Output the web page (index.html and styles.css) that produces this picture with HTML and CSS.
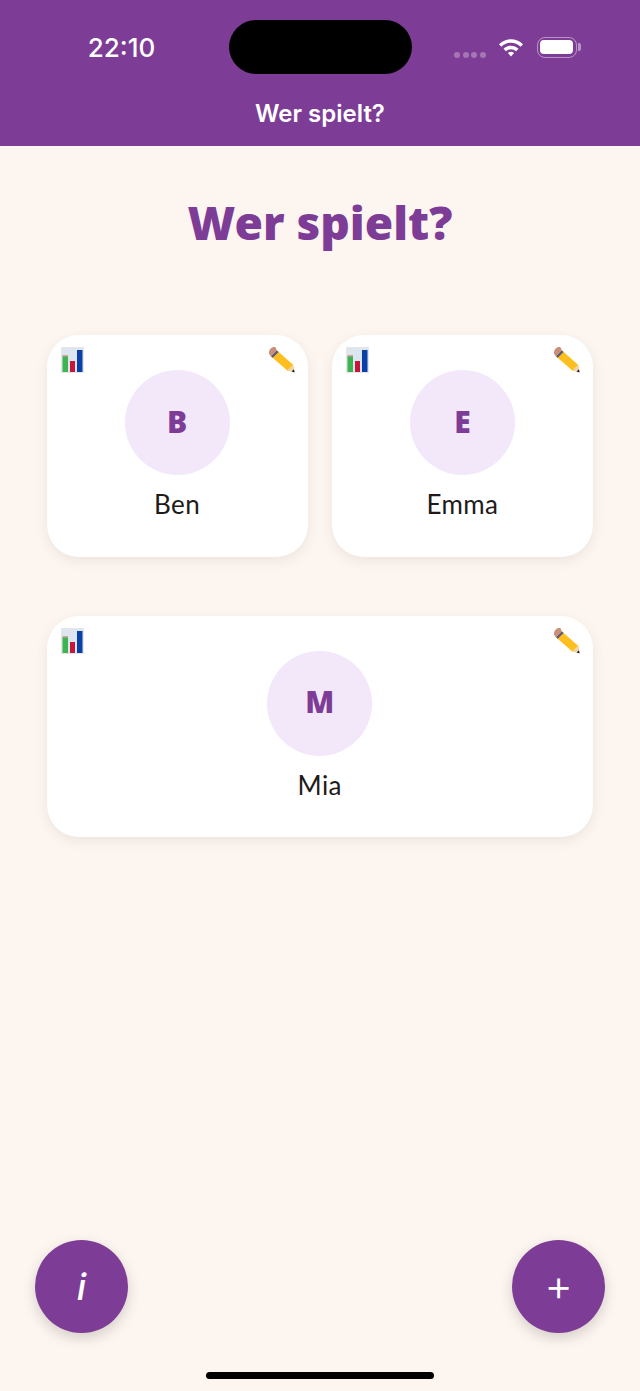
FILE: index.html
```html
<!DOCTYPE html>
<html lang="de">
<head>
    <meta charset="UTF-8">
    <meta name="viewport" content="width=device-width, initial-scale=1.0">
    <title>Wer spielt?</title>
    <link rel="stylesheet" href="styles.css">
</head>
<body>
    <header class="topbar">
        <div class="statusbar">
            <span class="clock">22:10</span>
            <div class="island"></div>
            <div class="status-icons">
                <div class="signal"><i></i><i></i><i></i><i></i></div>
                <svg class="wifi" width="28" height="20" viewBox="0 0 26 20">
                    <path d="M1 7.200C7.800 .6 18.200 .6 25 7.200l-2.400 2.500C17.100 4.500 8.900 4.500 3.400 9.700Z" fill="#fff"/>
                    <path d="M5.500 11.800C9.800 7.700 16.200 7.700 20.500 11.800l-2.400 2.400C15.200 11.500 10.800 11.500 7.900 14.200Z" fill="#fff"/>
                    <path d="M9.900 16C11.800 14.300 14.200 14.300 16.100 16L13 19.400Z" fill="#fff"/>
                </svg>
                <div class="battery"><div class="battery-level"></div></div>
                <div class="battery-tip"></div>
            </div>
        </div>
        <div class="topbar-title">Wer spielt?</div>
    </header>

    <main class="content">
        <h1>Wer spielt?</h1>

        <div class="players">
            <div class="card">
                <svg class="icon-stats" width="24" height="26" viewBox="0 0 24 26">
                    <rect x="0.500" y="0.500" width="22" height="25" fill="#dce6ee" stroke="#e6e6ea"/>
                    <rect x="1.500" y="9" width="5.500" height="16" fill="#3cb44f"/>
                    <rect x="1.500" y="8" width="5.500" height="1.500" fill="#d9a0a0"/>
                    <rect x="9" y="14" width="5" height="11" fill="#c4173a"/>
                    <rect x="16" y="3" width="5.500" height="22" fill="#0b3fa8"/>
                </svg>
                <svg class="icon-edit" width="27" height="27" viewBox="0 0 28 28">
                    <path d="M9 4.500L26 19.500L27.500 27L20 25.500L3 10.500Z" fill="#fdbf1f"/>
                    <path d="M20 25.500L26 19.500L27.500 27Z" fill="#f0d5a8"/>
                    <path d="M24.500 26.500L27 24L27.500 27.500Z" fill="#1c1c3a"/>
                    <path d="M3 10.500L9 4.500L11 6.300L5 12.300Z" fill="#5f5a78"/>
                    <path d="M1 7C1 3 5 0 8 1.500L9 4.500L3 10.500C2 9.500 1 8.500 1 7Z" fill="#c98f78"/>
                </svg>
                <div class="avatar">B</div>
                <div class="name">Ben</div>
            </div>
            <div class="card">
                <svg class="icon-stats" width="24" height="26" viewBox="0 0 24 26">
                    <rect x="0.500" y="0.500" width="22" height="25" fill="#dce6ee" stroke="#e6e6ea"/>
                    <rect x="1.500" y="9" width="5.500" height="16" fill="#3cb44f"/>
                    <rect x="1.500" y="8" width="5.500" height="1.500" fill="#d9a0a0"/>
                    <rect x="9" y="14" width="5" height="11" fill="#c4173a"/>
                    <rect x="16" y="3" width="5.500" height="22" fill="#0b3fa8"/>
                </svg>
                <svg class="icon-edit" width="27" height="27" viewBox="0 0 28 28">
                    <path d="M9 4.500L26 19.500L27.500 27L20 25.500L3 10.500Z" fill="#fdbf1f"/>
                    <path d="M20 25.500L26 19.500L27.500 27Z" fill="#f0d5a8"/>
                    <path d="M24.500 26.500L27 24L27.500 27.500Z" fill="#1c1c3a"/>
                    <path d="M3 10.500L9 4.500L11 6.300L5 12.300Z" fill="#5f5a78"/>
                    <path d="M1 7C1 3 5 0 8 1.500L9 4.500L3 10.500C2 9.500 1 8.500 1 7Z" fill="#c98f78"/>
                </svg>
                <div class="avatar">E</div>
                <div class="name">Emma</div>
            </div>
            <div class="card card-wide">
                <svg class="icon-stats" width="24" height="26" viewBox="0 0 24 26">
                    <rect x="0.500" y="0.500" width="22" height="25" fill="#dce6ee" stroke="#e6e6ea"/>
                    <rect x="1.500" y="9" width="5.500" height="16" fill="#3cb44f"/>
                    <rect x="1.500" y="8" width="5.500" height="1.500" fill="#d9a0a0"/>
                    <rect x="9" y="14" width="5" height="11" fill="#c4173a"/>
                    <rect x="16" y="3" width="5.500" height="22" fill="#0b3fa8"/>
                </svg>
                <svg class="icon-edit" width="27" height="27" viewBox="0 0 28 28">
                    <path d="M9 4.500L26 19.500L27.500 27L20 25.500L3 10.500Z" fill="#fdbf1f"/>
                    <path d="M20 25.500L26 19.500L27.500 27Z" fill="#f0d5a8"/>
                    <path d="M24.500 26.500L27 24L27.500 27.500Z" fill="#1c1c3a"/>
                    <path d="M3 10.500L9 4.500L11 6.300L5 12.300Z" fill="#5f5a78"/>
                    <path d="M1 7C1 3 5 0 8 1.500L9 4.500L3 10.500C2 9.500 1 8.500 1 7Z" fill="#c98f78"/>
                </svg>
                <div class="avatar">M</div>
                <div class="name">Mia</div>
            </div>
        </div>

        <div class="actions">
            <button class="fab fab-info">i</button>
            <button class="fab fab-add">+</button>
        </div>
    </main>

    <div class="home-indicator"></div>
</body>
</html>
```

FILE: styles.css
```css
* {
    margin: 0;
    padding: 0;
    box-sizing: border-box;
}

body {
    height: 100vh;
    background-color: #fdf5ef;
    font-family: "Lato", sans-serif;
    color: #211a1a;
    display: flex;
    flex-direction: column;
    overflow: hidden;
}

/* Barra superior */
.topbar {
    height: 146px;
    background-color: #7d3c96;
    color: #fff;
    font-family: "Inter", sans-serif;
    flex-shrink: 0;
}

.statusbar {
    height: 74px;
    padding-top: 20px;
    display: grid;
    grid-template-columns: 229px 183px 1fr;
}

.clock {
    font-size: 26px;
    font-weight: 500;
    line-height: 55px;
    text-align: center;
    padding-left: 14px;
}

.island {
    width: 183px;
    height: 54px;
    background-color: #000;
    border-radius: 27px;
}

.status-icons {
    display: flex;
    align-items: center;
    height: 54px;
    padding-left: 42px;
}

.signal {
    display: flex;
    gap: 2.500px;
    margin-top: 15px;
    margin-right: 11px;
}

.signal i {
    width: 6px;
    height: 6px;
    border-radius: 50%;
    background-color: rgba(255, 255, 255, 0.3);
}

.wifi {
    margin-right: 12px;
}

.battery {
    width: 40px;
    height: 21px;
    padding: 2.500px;
    border: 1.500px solid rgba(255, 255, 255, 0.45);
    border-radius: 8px;
}

.battery-level {
    height: 100%;
    background-color: #fff;
    border-radius: 4px;
}

.battery-tip {
    width: 3px;
    height: 8px;
    margin-left: 1px;
    background-color: rgba(255, 255, 255, 0.45);
    border-radius: 0 2px 2px 0;
}

.topbar-title {
    text-align: center;
    font-size: 24px;
    font-weight: 600;
    line-height: 28px;
    margin-top: 26px;
}

/* Conteudo */
.content {
    flex: 1;
    display: flex;
    flex-direction: column;
}

h1 {
    margin-top: 46px;
    height: 143px;
    text-align: center;
    font-family: "Noto Sans", sans-serif;
    font-size: 46px;
    font-weight: 900;
    line-height: 60px;
    color: #7d3c96;
}

.players {
    display: grid;
    grid-template-columns: 1fr 1fr;
    gap: 59px 24px;
    padding: 0 47px 0 46.500px;
}

.card {
    position: relative;
    height: 221.500px;
    padding-top: 35px;
    background-color: #fff;
    border-radius: 32px;
    box-shadow: 0 4px 14px rgba(0, 0, 0, 0.07);
    display: flex;
    flex-direction: column;
    align-items: center;
}

.card-wide {
    grid-column: span 2;
}

.icon-stats {
    position: absolute;
    top: 12px;
    left: 14px;
}

.icon-edit {
    position: absolute;
    top: 11px;
    right: 13px;
}

.avatar {
    width: 105px;
    height: 105px;
    padding-bottom: 3px;
    border-radius: 50%;
    background-color: #f3e8f9;
    color: #7d3c96;
    font-family: "Noto Sans", sans-serif;
    font-size: 30px;
    font-weight: 900;
    display: flex;
    align-items: center;
    justify-content: center;
}

.name {
    margin-top: 13px;
    font-size: 26px;
    letter-spacing: 0.4px;
    line-height: 32px;
}

/* Botoes flutuantes */
.actions {
    margin-top: auto;
    margin-bottom: 58px;
    padding: 0 35px;
    display: flex;
    justify-content: space-between;
}

.fab {
    width: 93px;
    height: 93px;
    border: none;
    border-radius: 50%;
    background-color: #7d3c96;
    color: #fff;
    font-family: "Inter", sans-serif;
    box-shadow: 0 5px 14px rgba(0, 0, 0, 0.16);
}

.fab-info {
    font-size: 37px;
    font-style: italic;
    font-weight: 500;
}

.fab-add {
    font-size: 44px;
    font-weight: 300;
    line-height: 44px;
    padding-bottom: 4px;
}

.home-indicator {
    position: absolute;
    left: 206px;
    bottom: 12px;
    width: 228px;
    height: 7px;
    background-color: #000;
    border-radius: 4px;
}
```
